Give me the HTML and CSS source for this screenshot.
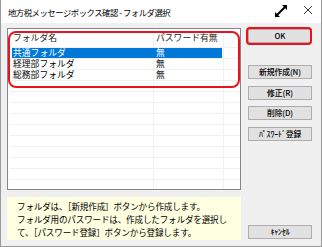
FILE: index.html
```html
<!DOCTYPE html>
<html lang="ja">
<head>
<meta charset="utf-8">
<link rel="stylesheet" href="styles.css">
</head>
<body>
<div class="win">
  <div class="titlebar">
    <span class="title">地方税メッセージボックス確認 - フォルダ選択</span>
    <svg class="ico-expand" width="16" height="16" viewBox="0 0 16 16">
      <path d="M3 13 L13 3" stroke="#000" stroke-width="2" fill="none"/>
      <path d="M9 2 H14 V7 Z" fill="#000"/>
      <path d="M2 9 V14 H7 Z" fill="#000"/>
    </svg>
    <svg class="ico-close" width="10" height="10" viewBox="0 0 10 10">
      <path d="M1 1 L9 9 M9 1 L1 9" stroke="#333" stroke-width="1" fill="none"/>
    </svg>
  </div>
  <div class="content">
    <div class="left">
      <div class="list">
        <div class="row hdr"><div class="c1">フォルダ名</div><div class="c2">パスワード有無</div><div class="c3"></div></div>
        <div class="row sel"><div class="c1">共通フォルダ</div><div class="c2">無</div><div class="c3"></div></div>
        <div class="row"><div class="c1">経理部フォルダ</div><div class="c2">無</div><div class="c3"></div></div>
        <div class="row"><div class="c1">総務部フォルダ</div><div class="c2">無</div><div class="c3"></div></div>
        <div class="row"><div class="c1"></div><div class="c2"></div><div class="c3"></div></div>
        <div class="row"><div class="c1"></div><div class="c2"></div><div class="c3"></div></div>
        <div class="row"><div class="c1"></div><div class="c2"></div><div class="c3"></div></div>
        <div class="row"><div class="c1"></div><div class="c2"></div><div class="c3"></div></div>
        <div class="row"><div class="c1"></div><div class="c2"></div><div class="c3"></div></div>
        <div class="row"><div class="c1"></div><div class="c2"></div><div class="c3"></div></div>
        <div class="row"><div class="c1"></div><div class="c2"></div><div class="c3"></div></div>
        <div class="row"><div class="c1"></div><div class="c2"></div><div class="c3"></div></div>
        <div class="row"><div class="c1"></div><div class="c2"></div><div class="c3"></div></div>
        <div class="row"><div class="c1"></div><div class="c2"></div><div class="c3"></div></div>
        <div class="mark mark-list"></div>
      </div>
      <div class="info">
        <div>フォルダは、［新規作成］ボタンから作成します。</div>
        <div>フォルダ用のパスワードは、作成したフォルダを選択し</div>
        <div>て、［パスワード登録］ボタンから登録します。</div>
      </div>
    </div>
    <div class="right">
      <div class="okwrap">
        <div class="btn">OK</div>
        <div class="mark mark-ok"></div>
      </div>
      <div class="group">
        <div class="btn">新規作成(N)</div>
        <div class="btn">修正(R)</div>
        <div class="btn">削除(D)</div>
        <div class="btn">ﾊﾟｽﾜｰﾄﾞ登録</div>
      </div>
      <div class="btn cancel">ｷｬﾝｾﾙ</div>
    </div>
  </div>
</div>
</body>
</html>
```

FILE: styles.css
```css
* { box-sizing: border-box; }
html, body { margin: 0; padding: 0; }
body {
  font-family: "Noto Sans CJK JP", "Noto Sans", sans-serif;
  color: #000;
  background: #fff;
}
.win {
  width: 322px;
  height: 247px;
  border: 1px solid #9a9a9a;
  border-top: none;
  display: flex;
  flex-direction: column;
}
.titlebar {
  height: 23px;
  background: #fff;
  display: flex;
  align-items: center;
  padding-left: 7px;
  flex: none;
}
.title {
  font-size: 8.4px;
  letter-spacing: -0.5px;
  color: #000;
  flex: 1;
}
.ico-expand { margin-right: 14px; margin-top: -2px; }
.ico-close { margin-right: 8px; margin-top: -3px; }

.content {
  flex: 1;
  background: #f0f0f0;
  display: flex;
}
.left {
  width: 234px;
  margin-left: 6px;
  padding-top: 5px;
  display: flex;
  flex-direction: column;
}
.list {
  position: relative;
  height: 162px;
  border: 1px solid #828790;
  background: #fff;
  padding-left: 2px;
  overflow: hidden;
  font-size: 8.8px;
}
.row {
  display: grid;
  grid-template-columns: 143px 70px 1fr;
  height: 11px;
  border-top: 1px solid #f0f0f0;
  line-height: 10px;
}
.row.hdr {
  height: 18px;
  border-top: none;
  line-height: 17px;
}
.row .c1 { padding-left: 3px; white-space: nowrap; }
.row .c2 { border-left: 1px solid #f0f0f0; padding-left: 2px; white-space: nowrap; }
.row .c3 { border-left: 1px solid #f0f0f0; }
.row.hdr .c1, .row.hdr .c2 { color: #1a1a1a; }
.row.sel {
  background: linear-gradient(#0078d7, #0078d7) 2px -1px / 210px 11px no-repeat;
  color: #fff;
}
.row.sel .c2 { border-left-color: #0078d7; }

.info {
  margin-top: 7px;
  height: 43px;
  background: #ffffe1;
  padding: 3px 0 0 10px;
  font-size: 8.6px;
  line-height: 13px;
  white-space: nowrap;
  letter-spacing: -0.2px;
}

.right {
  width: 64px;
  margin-left: 7px;
  padding-top: 6px;
  padding-bottom: 7px;
  display: flex;
  flex-direction: column;
}
.okwrap { position: relative; }
.group {
  margin-top: 22px;
  display: flex;
  flex-direction: column;
  gap: 6.5px;
}
.btn {
  height: 14px;
  background: #e1e1e1;
  border: 1px solid #adadad;
  font-size: 7.8px;
  line-height: 12px;
  text-align: center;
  color: #000;
  white-space: nowrap;
  font-weight: 500;
  letter-spacing: -0.1px;
}
.cancel { margin-top: auto; }

.mark {
  position: absolute;
  border: 2.5px solid #e8141c;
  pointer-events: none;
}
.mark-list {
  left: 0px;
  top: 2px;
  width: 232px;
  height: 57px;
  border-radius: 8px;
}
.mark-ok {
  left: -2px;
  top: -2px;
  width: 66px;
  height: 18px;
  border-radius: 4px;
}
```
